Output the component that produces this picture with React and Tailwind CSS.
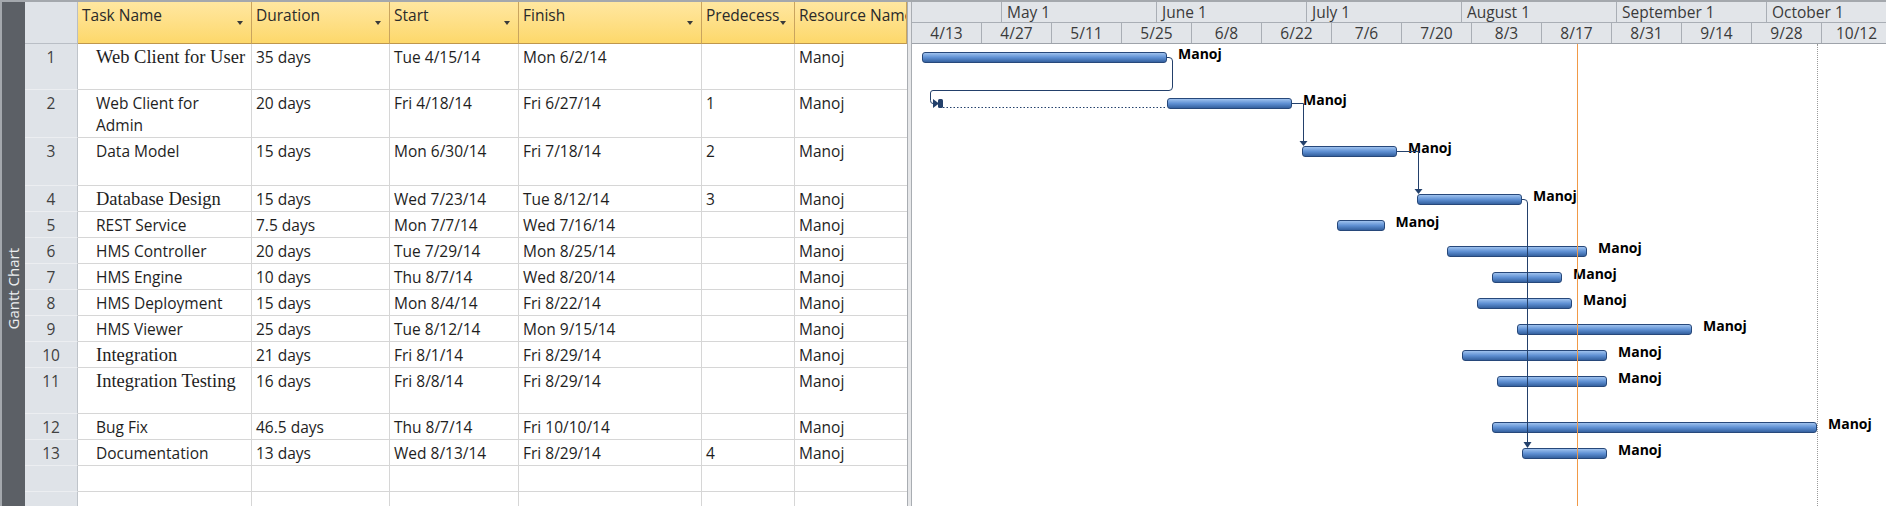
const SANS = "font-['Open_Sans',sans-serif]";
const SERIF = "font-['Liberation_Serif',serif]";
const DAY = 5; // px per calendar day, day 0 = 4/13

const TASKS = [
  { id: 1, name: "Web Client for User", serif: true, dur: "35 days", start: "Tue 4/15/14", finish: "Mon 6/2/14", pred: "", h: "h-[46px]", from: 2, to: 51 },
  { id: 2, name: "Web Client for Admin", dur: "20 days", start: "Fri 4/18/14", finish: "Fri 6/27/14", pred: "1", h: "h-[48px]", from: 51, to: 76 },
  { id: 3, name: "Data Model", dur: "15 days", start: "Mon 6/30/14", finish: "Fri 7/18/14", pred: "2", h: "h-[48px]", from: 78, to: 97 },
  { id: 4, name: "Database Design", serif: true, dur: "15 days", start: "Wed 7/23/14", finish: "Tue 8/12/14", pred: "3", h: "h-[26px]", from: 101, to: 122 },
  { id: 5, name: "REST Service", dur: "7.5 days", start: "Mon 7/7/14", finish: "Wed 7/16/14", pred: "", h: "h-[26px]", from: 85, to: 94.5 },
  { id: 6, name: "HMS Controller", dur: "20 days", start: "Tue 7/29/14", finish: "Mon 8/25/14", pred: "", h: "h-[26px]", from: 107, to: 135 },
  { id: 7, name: "HMS Engine", dur: "10 days", start: "Thu 8/7/14", finish: "Wed 8/20/14", pred: "", h: "h-[26px]", from: 116, to: 130 },
  { id: 8, name: "HMS Deployment", dur: "15 days", start: "Mon 8/4/14", finish: "Fri 8/22/14", pred: "", h: "h-[26px]", from: 113, to: 132 },
  { id: 9, name: "HMS Viewer", dur: "25 days", start: "Tue 8/12/14", finish: "Mon 9/15/14", pred: "", h: "h-[26px]", from: 121, to: 156 },
  { id: 10, name: "Integration", serif: true, dur: "21 days", start: "Fri 8/1/14", finish: "Fri 8/29/14", pred: "", h: "h-[26px]", from: 110, to: 139 },
  { id: 11, name: "Integration Testing", serif: true, dur: "16 days", start: "Fri 8/8/14", finish: "Fri 8/29/14", pred: "", h: "h-[46px]", from: 117, to: 139 },
  { id: 12, name: "Bug Fix", dur: "46.5 days", start: "Thu 8/7/14", finish: "Fri 10/10/14", pred: "", h: "h-[26px]", from: 116, to: 181 },
  { id: 13, name: "Documentation", dur: "13 days", start: "Wed 8/13/14", finish: "Fri 8/29/14", pred: "4", h: "h-[26px]", from: 122, to: 139 },
];

const COLS = [
  { key: "name", label: "Task Name", w: "w-[174px]", arrow: true },
  { key: "dur", label: "Duration", w: "w-[138px]", arrow: true },
  { key: "start", label: "Start", w: "w-[129px]", arrow: true },
  { key: "finish", label: "Finish", w: "w-[183px]", arrow: true },
  { key: "pred", label: "Predecessors", w: "w-[93px]", arrow: true },
  { key: "res", label: "Resource Name", w: "w-[112px]", arrow: false },
];

const MONTHS = [
  { label: "", w: "w-[90px]" },
  { label: "May 1", w: "w-[155px]" },
  { label: "June 1", w: "w-[150px]" },
  { label: "July 1", w: "w-[155px]" },
  { label: "August 1", w: "w-[155px]" },
  { label: "September 1", w: "w-[150px]" },
  { label: "October 1", w: "w-[150px]" },
];

const WEEKS = ["4/13", "4/27", "5/11", "5/25", "6/8", "6/22", "7/6", "7/20", "8/3", "8/17", "8/31", "9/14", "9/28", "10/12"];

function SideTab() {
  return (
    <div className="w-[25px] shrink-0 flex items-center justify-center pt-[70px] bg-[#5c6066] border-l-2 border-[#a4a8ad]">
      <span className="[writing-mode:vertical-rl] rotate-180 whitespace-nowrap text-[15px] text-[#eceef0]">
        Gantt Chart
      </span>
    </div>
  );
}

function TaskTable() {
  return (
    <div className="w-[882px] shrink-0 flex flex-col">
      {/* header */}
      <div className="flex h-[42px] shrink-0">
        <div className="w-[53px] shrink-0 bg-[#dfe3e8] border-r border-b border-[#b9bec5]" />
        {COLS.map((c) => (
          <div
            key={c.key}
            className={`${c.w} shrink-0 flex items-start bg-linear-to-b from-[#ffe7a0] to-[#fdd86a] border-r border-[#c9a45e] border-b border-b-[#bf974d]`}
          >
            <span className="flex-1 min-w-0 overflow-hidden whitespace-nowrap pl-[4px] pt-[2px] leading-[22px] text-[#2a2a2a]">
              {c.label}
            </span>
            {c.arrow && (
              <span className="shrink-0 mt-[19px] mr-[8px] w-0 h-0 border-x-[3px] border-x-transparent border-t-[4px] border-t-[#3a3a3a]" />
            )}
          </div>
        ))}
      </div>

      {/* rows */}
      {TASKS.map((t) => (
        <div key={t.id} className={`flex shrink-0 ${t.h}`}>
          <div className="w-[53px] shrink-0 bg-[#dfe3e8] border-r border-[#bfc4ca] border-b border-b-[#eceef1] text-center pt-[2px] leading-[22px] text-[#404040]">
            {t.id}
          </div>
          <div className={`w-[174px] shrink-0 border-r border-b border-[#d6d6d6] pl-[18px] pr-[8px] pt-[2px] leading-[22px] ${t.serif ? `${SERIF} text-[18.5px] whitespace-nowrap` : ""}`}>
            {t.name}
          </div>
          <div className="w-[138px] shrink-0 border-r border-b border-[#d6d6d6] px-[4px] pt-[2px] leading-[22px] whitespace-nowrap">{t.dur}</div>
          <div className="w-[129px] shrink-0 border-r border-b border-[#d6d6d6] px-[4px] pt-[2px] leading-[22px] whitespace-nowrap">{t.start}</div>
          <div className="w-[183px] shrink-0 border-r border-b border-[#d6d6d6] px-[4px] pt-[2px] leading-[22px] whitespace-nowrap">{t.finish}</div>
          <div className="w-[93px] shrink-0 border-r border-b border-[#d6d6d6] px-[4px] pt-[2px] leading-[22px]">{t.pred}</div>
          <div className="w-[112px] shrink-0 border-b border-[#d6d6d6] px-[4px] pt-[2px] leading-[22px]">Manoj</div>
        </div>
      ))}

      {[0, 1].map((i) => (
        <div key={i} className="flex shrink-0 h-[26px]">
          <div className="w-[53px] shrink-0 bg-[#dfe3e8] border-r border-[#bfc4ca] border-b border-b-[#eceef1]" />
          <div className="w-[174px] shrink-0 border-r border-b border-[#d6d6d6]" />
          <div className="w-[138px] shrink-0 border-r border-b border-[#d6d6d6]" />
          <div className="w-[129px] shrink-0 border-r border-b border-[#d6d6d6]" />
          <div className="w-[183px] shrink-0 border-r border-b border-[#d6d6d6]" />
          <div className="w-[93px] shrink-0 border-r border-b border-[#d6d6d6]" />
          <div className="w-[112px] shrink-0 border-b border-[#d6d6d6]" />
        </div>
      ))}
    </div>
  );
}

function Connectors() {
  return (
    <svg className="absolute inset-0 w-full h-full pointer-events-none" fill="none">
      <g stroke="#23406b" strokeWidth="1">
        <path d="M255 13.5 H257 Q260.5 13.5 260.5 17 V43 Q260.5 46.5 257 46.5 H21 Q18.5 46.5 18.5 49 V56.5 Q18.5 59.5 21 59.5 H22" />
        <path d="M31 63.5 H255" strokeDasharray="1.5 2" />
        <path d="M380 59.5 H391.5 V98" />
        <path d="M485 107.5 H506.5 V146" />
        <path d="M610 155.5 H612 Q615.5 155.5 615.5 159 V399" />
      </g>
      <g fill="#23406b">
        <polygon points="21,55 27,59.5 21,64" />
        <rect x="26" y="55" width="5" height="9" rx="1.5" />
        <polygon points="387.5,97 395.5,97 391.5,102" />
        <polygon points="502.5,145 510.5,145 506.5,150" />
        <polygon points="611.5,398 619.5,398 615.5,404" />
      </g>
    </svg>
  );
}

function Gantt() {
  return (
    <div className="flex-1 min-w-0 flex flex-col">
      {/* timescale */}
      <div className="flex h-[21px] shrink-0 bg-[#e2e5e9] border-b border-[#a9aeb5]">
        {MONTHS.map((m, i) => (
          <div key={i} className={`${m.w} shrink-0 border-r border-[#a9aeb5] pl-[5px] leading-[20px] whitespace-nowrap text-[#3a3a3a]`}>
            {m.label}
          </div>
        ))}
      </div>
      <div className="flex h-[21px] shrink-0 bg-[#e2e5e9] border-b border-[#9ea3aa]">
        {WEEKS.map((w) => (
          <div key={w} className="w-[70px] shrink-0 border-r border-[#a9aeb5] text-center leading-[20px] text-[#3a3a3a]">
            {w}
          </div>
        ))}
      </div>

      {/* bars */}
      <div className="relative flex-1 flex flex-col">
        {TASKS.map((t) => (
          <div key={t.id} className={`relative shrink-0 ${t.h}`}>
            <div
              className="absolute top-[8px] h-[11px] rounded-[3px] border border-[#27487a] bg-linear-to-b from-[#9fc2ee] via-[#5f90d3] to-[#35619f]"
              style={{ left: t.from * DAY, width: (t.to - t.from) * DAY }}
            />
            <span
              className="absolute top-0 leading-[20px] text-[14px] font-bold text-black whitespace-nowrap"
              style={{ left: t.to * DAY + 11 }}
            >
              Manoj
            </span>
          </div>
        ))}

        <div className="absolute top-0 bottom-0 left-[665px] w-px bg-[#f19a48]" />
        <div className="absolute top-0 bottom-0 left-[905px] border-l border-dotted border-[#9a9a9a]" />
        <Connectors />
      </div>
    </div>
  );
}

export default function App() {
  return (
    <div className={`flex w-[1886px] h-[506px] overflow-hidden bg-white border-t-2 border-[#a4a8ad] ${SANS} text-[15.5px] text-[#1e1e1e]`}>
      <SideTab />
      <TaskTable />
      <div className="w-[5px] shrink-0 bg-[#e6e7e9] border-x border-[#a9adb2]" />
      <Gantt />
    </div>
  );
}
